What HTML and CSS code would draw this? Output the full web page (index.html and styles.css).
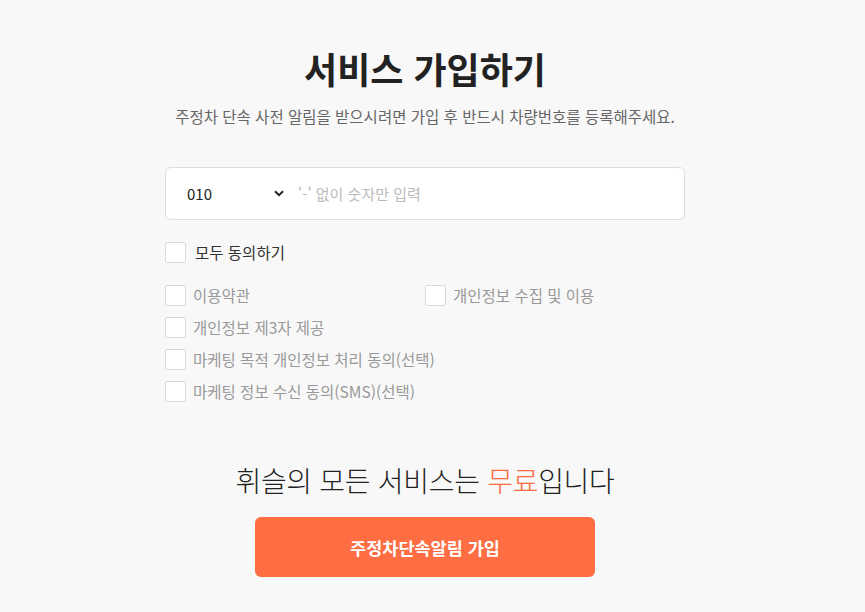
FILE: index.html
```html
<!DOCTYPE html>
<html lang="ko">
<head>
<meta charset="utf-8">
<link rel="stylesheet" href="styles.css">
</head>
<body>
<main class="page">
  <h1 class="title">서비스 가입하기</h1>
  <p class="subtitle">주정차 단속 사전 알림을 받으시려면 가입 후 반드시 차량번호를 등록해주세요.</p>
  <div class="phone">
    <div class="select">
      <span class="prefix">010</span>
      <svg class="chev" width="10" height="7" viewBox="0 0 10 7"><path d="M1 1.2 L5 5.2 L9 1.2" fill="none" stroke="#222" stroke-width="2"/></svg>
    </div>
    <span class="placeholder">'-' 없이 숫자만 입력</span>
  </div>
  <label class="check all"><span class="box"></span><span>모두 동의하기</span></label>
  <div class="terms">
    <label class="check"><span class="box"></span><span>이용약관</span></label>
    <label class="check"><span class="box"></span><span>개인정보 수집 및 이용</span></label>
    <label class="check wide"><span class="box"></span><span>개인정보 제3자 제공</span></label>
    <label class="check wide"><span class="box"></span><span>마케팅 목적 개인정보 처리 동의(선택)</span></label>
    <label class="check wide"><span class="box"></span><span>마케팅 정보 수신 동의(SMS)(선택)</span></label>
  </div>
  <p class="free">휘슬의 모든 서비스는 <em>무료</em>입니다</p>
  <button class="submit">주정차단속알림 가입</button>
</main>
</body>
</html>
```

FILE: styles.css
```css
html, body {
  margin: 0;
  padding: 0;
  background: #f8f8f8;
  font-family: "Noto Sans CJK KR", "Noto Sans", sans-serif;
}
body {
  padding-right: 15px;
}
.page {
  width: 520px;
  margin: 0 auto;
  padding-top: 42px;
  display: flex;
  flex-direction: column;
  align-items: stretch;
}
.title {
  margin: 0;
  text-align: center;
  font-size: 36px;
  font-weight: 700;
  color: #222;
  line-height: 52px;
}
.subtitle {
  margin: 11px 0 0;
  text-align: center;
  font-size: 15.5px;
  color: #666;
  line-height: 22px;
  white-space: nowrap;
}
.phone {
  margin-top: 40px;
  height: 51px;
  background: #fff;
  border: 1px solid #dddddd;
  border-radius: 6px;
  display: flex;
  align-items: center;
  padding-left: 21px;
}
.select {
  display: flex;
  align-items: center;
  justify-content: space-between;
  padding-right: 14px;
  box-sizing: border-box;
  width: 111px;
}
.prefix {
  font-size: 15px;
  color: #222;
}
.chev { display: block; }
.placeholder {
  font-size: 15px;
  color: #bbb;
}
.check {
  display: flex;
  align-items: center;
  gap: 7px;
  font-size: 15.5px;
  color: #999;
  height: 32px;
}
.check.all {
  margin-top: 16px;
  color: #333;
  gap: 9px;
  font-size: 15.5px;
}
.box {
  width: 19px;
  height: 19px;
  background: #fff;
  border: 1px solid #d9d9d9;
  border-radius: 2px;
  flex: none;
}
.terms {
  margin-top: 11px;
  display: grid;
  grid-template-columns: 260px 260px;
}
.terms .wide { grid-column: 1 / span 2; }
.free {
  margin: 53px 0 0;
  text-align: center;
  font-size: 28px;
  font-weight: 300;
  color: #222;
  line-height: 40px;
  letter-spacing: -0.3px;
}
.free em {
  font-style: normal;
  color: #ff6c42;
}
.submit {
  align-self: center;
  margin-top: 17px;
  width: 340px;
  height: 60px;
  border: none;
  border-radius: 6px;
  background: #ff6d42;
  color: #fff;
  font-family: inherit;
  font-size: 17.5px;
  font-weight: 700;
}
```
